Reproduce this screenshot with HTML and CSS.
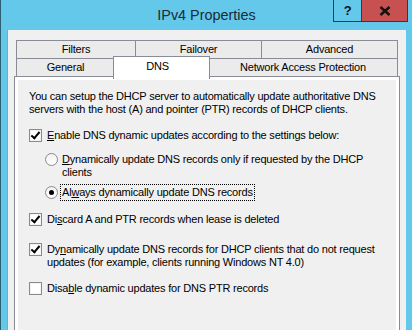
FILE: index.html
```html
<!DOCTYPE html>
<html lang="en">
<head>
    <meta charset="UTF-8">
    <meta name="viewport" content="width=device-width, initial-scale=1.0">
    <title>IPv4 Properties</title>
    <link rel="stylesheet" href="styles.css">
</head>
<body>
    <div class="window">
        <div class="titlebar">
            <span></span>
            <div class="title">IPv4 Properties</div>
            <div class="controls">
                <div class="ctl help">?</div>
                <div class="ctl close">
                    <svg width="12" height="10" viewBox="0 0 12 10">
                        <path d="M1.5 1 L10.5 9 M10.5 1 L1.5 9" stroke="#111" stroke-width="2.4" fill="none"/>
                    </svg>
                </div>
            </div>
        </div>

        <div class="client">
            <div class="tabs">
                <div class="tab-row">
                    <div class="tab tab-filters">Filters</div>
                    <div class="tab tab-failover">Failover</div>
                    <div class="tab tab-advanced">Advanced</div>
                </div>
                <div class="tab-row">
                    <div class="tab tab-general">General</div>
                    <div class="tab tab-dns selected">DNS</div>
                    <div class="tab tab-nap">Network Access Protection</div>
                </div>
            </div>

            <div class="page">
                <div class="content">
                    <p class="intro">You can setup the DHCP server to automatically update authoritative DNS servers with the host (A) and pointer (PTR) records of DHCP clients.</p>

                    <label class="option opt-enable">
                        <span class="check on"></span>
                        <span><u>E</u>nable DNS dynamic updates according to the settings below:</span>
                    </label>

                    <div class="radios">
                        <label class="option opt-radio1">
                            <span class="radio"></span>
                            <span><u>D</u>ynamically update DNS records only if requested by the DHCP clients</span>
                        </label>
                        <label class="option opt-radio2">
                            <span class="radio on"></span>
                            <span class="focus">Al<u>w</u>ays dynamically update DNS records</span>
                        </label>
                    </div>

                    <label class="option opt-discard">
                        <span class="check on"></span>
                        <span>Di<u>s</u>card A and PTR records when lease is deleted</span>
                    </label>

                    <label class="option opt-legacy">
                        <span class="check on"></span>
                        <span>Dy<u>n</u>amically update DNS records for DHCP clients that do not request updates (for example, clients running Windows NT 4.0)</span>
                    </label>

                    <label class="option opt-ptr">
                        <span class="check"></span>
                        <span>Disa<u>b</u>le dynamic updates for DNS PTR records</span>
                    </label>
                </div>
            </div>
        </div>
    </div>
</body>
</html>
```

FILE: styles.css
```css
html, body { margin: 0; padding: 0; }
body { width: 412px; height: 330px; overflow: hidden; background: #63c8ea; font-family: "Liberation Sans", Arial, sans-serif; font-size: 11px; letter-spacing: -0.2px; color: #000; }
.window { border-left: 1px solid #2d5f72; height: 330px; }

.titlebar { display: grid; grid-template-columns: 1fr auto 1fr; height: 30px; }
.title { line-height: 30px; font-size: 14.4px; letter-spacing: 0; color: #1b2a33; }
.controls { justify-self: end; align-self: start; display: flex; margin-right: 4px; }
.ctl { height: 21px; border: 1px solid #2a3d46; border-top: none; display: flex; align-items: center; justify-content: center; }
.help { width: 27px; border-right: none; font-weight: bold; font-size: 13px; color: #111; }
.close { width: 45px; background: #c75050; }

.client { margin: 0 6px 0 6px; border-left: 1px solid #9a9fa3; background: #f0f0f0; padding: 10px 6px 0 6px; height: 300px; }

.tabs { padding: 0 2px; }
.tab-row { display: flex; height: 19px; }
.tab-row + .tab-row { margin-top: -1px; }
.tab { box-sizing: border-box; height: 19px; border: 1px solid #898c95; background: #ebebeb; text-align: center; line-height: 17px; color: #000; }
.tab + .tab { margin-left: -1px; }
.tab-filters { width: 120px; }
.tab-failover { width: 127px; }
.tab-advanced { width: 137px; }
.tab-general { width: 99px; }
.tab-nap { width: 190px; }
.tab.selected { position: relative; z-index: 2; width: 97px; height: 23px; margin: -2px -1px 0 -2px; background: #fff; border-bottom: none; padding-right: 8px; line-height: 18px; }

.page { margin-top: -1px; border: 1px solid #898c95; background: #fff; padding: 3px; height: 260px; }
.content { background: #f0f0f0; height: 100%; padding: 10px 4px 0 11px; box-sizing: border-box; line-height: 13px; }

.intro { margin: 0; }
.option { display: flex; align-items: flex-start; }
.option u { text-decoration: underline; text-underline-offset: 1px; }
.opt-enable { margin-top: 13px; }
.radios { padding-left: 16px; }
.opt-radio1 { margin-top: 11px; }
.opt-radio2 { margin-top: 7px; }
.opt-discard { margin-top: 14px; }
.opt-legacy { margin-top: 17px; }
.opt-ptr { margin-top: 13px; }

.check { flex: none; box-sizing: border-box; width: 13px; height: 13px; margin-right: 5px; border: 1px solid #8a8a8a; background: #fff; box-shadow: inset 0 0 0 1px #f4f4f4; position: relative; }
.check.on::after { content: ""; position: absolute; left: 3px; top: 0px; width: 3px; height: 7px; border: solid #000; border-width: 0 2px 2px 0; transform: rotate(40deg); }

.radio { flex: none; box-sizing: border-box; width: 13px; height: 13px; margin-right: 4px; border: 1px solid #8a8a8a; border-radius: 50%; background: linear-gradient(#f2f2f2, #fff); position: relative; }
.radio.on::after { content: ""; position: absolute; left: 3px; top: 3px; width: 5px; height: 5px; border-radius: 50%; background: #000; }

.focus { outline: 1px dotted #000; outline-offset: 1px; }
```
